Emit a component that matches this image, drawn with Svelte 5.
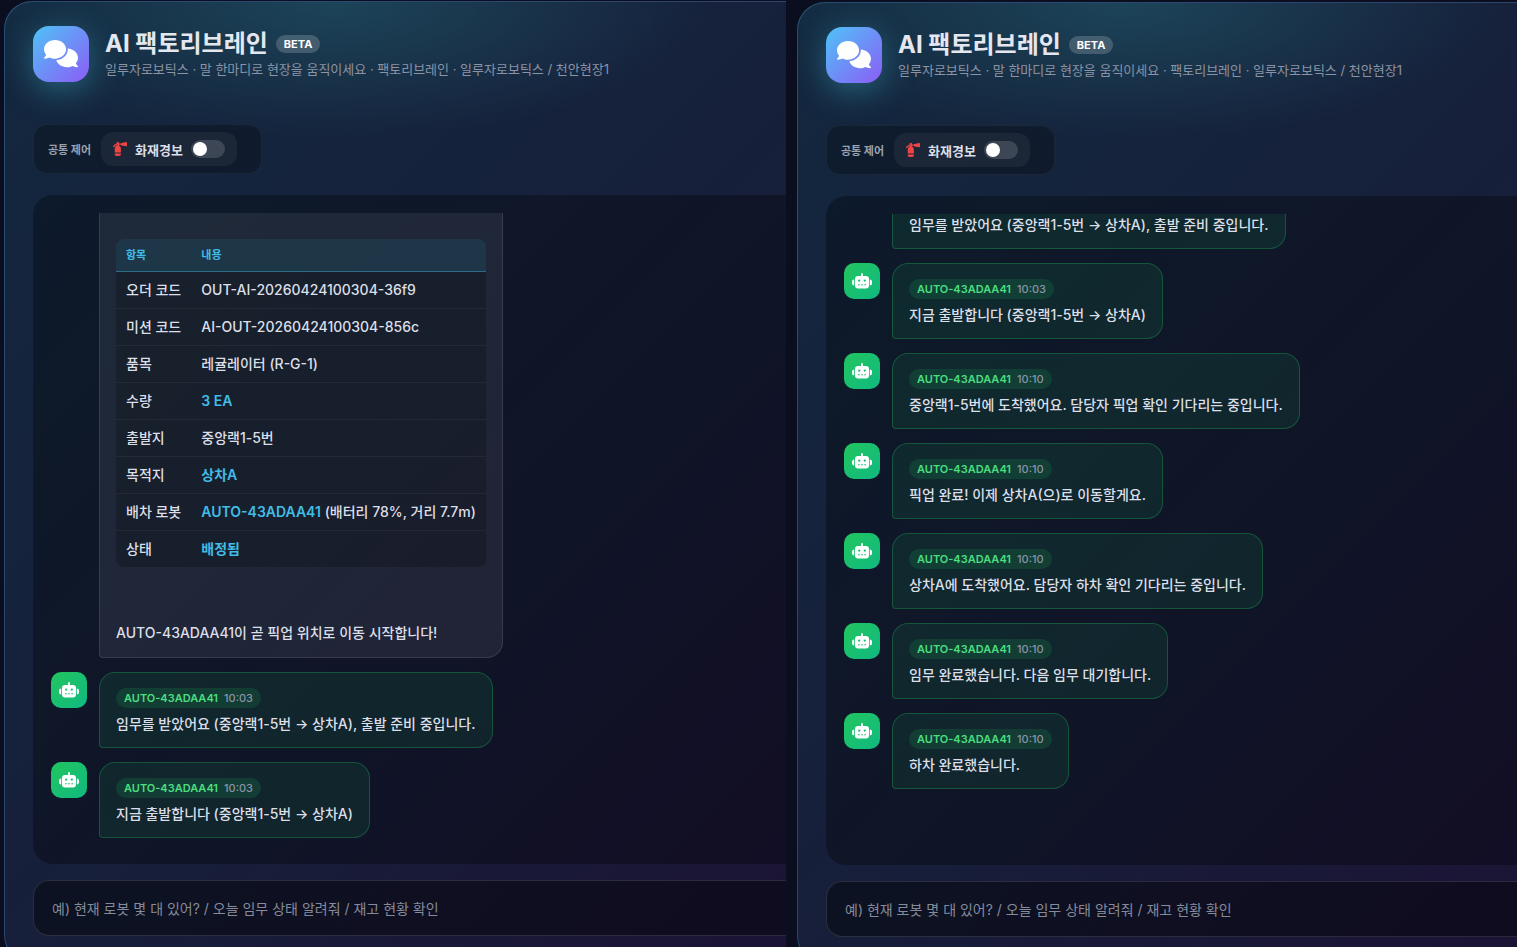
<script>
  const order = [
    { label: '오더 코드', value: 'OUT-AI-20260424100304-36f9' },
    { label: '미션 코드', value: 'AI-OUT-20260424100304-856c' },
    { label: '품목', value: '레귤레이터 (R-G-1)' },
    { label: '수량', strong: '3 EA' },
    { label: '출발지', value: '중앙랙1-5번' },
    { label: '목적지', strong: '상차A' },
    { label: '배차 로봇', strong: 'AUTO-43ADAA41', value: ' (배터리 78%, 거리 7.7m)' },
    { label: '상태', strong: '배정됨' },
  ];

  const robot = 'AUTO-43ADAA41';
  const accepted = { time: '10:03', text: '임무를 받았어요 (중앙랙1-5번 → 상차A), 출발 준비 중입니다.' };
  const departed = { time: '10:03', text: '지금 출발합니다 (중앙랙1-5번 → 상차A)' };

  const panes = [
    { id: 'first', order: true, messages: [accepted, departed] },
    {
      id: 'second',
      order: false,
      messages: [
        accepted,
        departed,
        { time: '10:10', text: '중앙랙1-5번에 도착했어요. 담당자 픽업 확인 기다리는 중입니다.' },
        { time: '10:10', text: '픽업 완료! 이제 상차A(으)로 이동할게요.' },
        { time: '10:10', text: '상차A에 도착했어요. 담당자 하차 확인 기다리는 중입니다.' },
        { time: '10:10', text: '임무 완료했습니다. 다음 임무 대기합니다.' },
        { time: '10:10', text: '하차 완료했습니다.' },
      ],
    },
  ];

  let alarms = $state({ first: false, second: false });
</script>

{#snippet robotIcon()}
  <div class="avatar">
    <svg viewBox="0 0 20 16" aria-hidden="true">
      <path fill-rule="evenodd" d="M10 0a.9.9 0 0 1 .9.9V3H14a3 3 0 0 1 3 3v6.500a3 3 0 0 1-3 3H6a3 3 0 0 1-3-3V6a3 3 0 0 1 3-3h3.100V.9A.9.9 0 0 1 10 0zM7.200 6.400a1.150 1.150 0 1 0 0 2.300 1.150 1.150 0 0 0 0-2.300zM12.800 6.400a1.150 1.150 0 1 0 0 2.300 1.150 1.150 0 0 0 0-2.300zM6 11.300v1h1.700v-1zM9.150 11.300v1h1.700v-1zM12.300 11.300v1H14v-1z" />
      <path d="M2.200 6.500v6A2.200 2.200 0 0 1 0 10.300V8.700a2.200 2.200 0 0 1 2.200-2.200zM17.800 6.500A2.200 2.200 0 0 1 20 8.700v1.600a2.200 2.200 0 0 1-2.200 2.200z" />
    </svg>
  </div>
{/snippet}

<div class="split">
  {#each panes as pane (pane.id)}
    <section class="pane {pane.id}">
      <div class="panel">
        <header>
          <div class="logo">
            <svg viewBox="0 0 640 512" aria-hidden="true">
              <path d="M208 352c114.9 0 208-78.8 208-176S322.9 0 208 0S0 78.8 0 176c0 38.6 14.7 74.3 39.6 103.4c-3.5 9.4-8.7 17.7-14.2 24.7c-4.8 6.2-9.7 11-13.3 14.3c-1.8 1.6-3.3 2.9-4.3 3.7c-.5 .4-.9 .7-1.1 .8l-.2 .2C1 327.2-1.4 334.4 .8 340.9S9.1 352 16 352c21.8 0 43.8-5.6 62.1-12.5c9.2-3.5 17.8-7.4 25.2-11.4C134.1 343.3 169.8 352 208 352zM448 176c0 112.3-99.1 196.9-216.5 207C255.8 457.4 336.4 512 432 512c38.2 0 73.9-8.7 104.7-23.9c7.5 4 16 7.9 25.2 11.4c18.3 6.9 40.3 12.5 62.1 12.5c6.9 0 13.1-4.5 15.2-11.1c2.1-6.6-.2-13.8-5.8-17.9l-.2-.2c-.2-.2-.6-.4-1.1-.8c-1-.8-2.5-2-4.3-3.7c-3.6-3.3-8.5-8.1-13.3-14.3c-5.5-7-10.7-15.4-14.2-24.7c24.9-29 39.6-64.7 39.6-103.4c0-92.8-84.9-168.9-192.6-175.5c.4 5.1 .6 10.3 .6 15.5z" />
            </svg>
          </div>
          <div class="titles">
            <h1>AI 팩토리브레인 <span class="beta">BETA</span></h1>
            <p>일루자로보틱스 · 말 한마디로 현장을 움직이세요 · 팩토리브레인 · 일루자로보틱스 / 천안현장1</p>
          </div>
        </header>

        <div class="controls">
          <span class="controls-title">공통 제어</span>
          <label class="alarm">
            <svg viewBox="0 0 512 512" aria-hidden="true">
              <path d="M500.3 7.3C507.7 13.3 512 22.4 512 32v96c0 9.6-4.3 18.7-11.7 24.7s-17.2 8.5-26.6 6.6l-160-32C301.5 124.9 292 115.7 289 104H224v34.8c37.8 18 64 56.5 64 101.2V384H64V240c0-44.7 26.2-83.2 64-101.2V110c-36.2 11.1-66 36.9-82.3 70.5c-5.8 11.9-20.2 16.9-32.1 11.1S-3.3 171.4 2.5 159.5C26.7 109.8 72.7 72.6 128 60.4V32c0-17.7 14.3-32 32-32h32c17.7 0 32 14.3 32 32V56h65c3-11.7 12.5-20.9 24.7-23.4l160-32c9.4-1.9 19.1 .6 26.6 6.6zM288 416v32c0 35.3-28.7 64-64 64H128c-35.3 0-64-28.7-64-64V416H288zM176 96a16 16 0 1 0 0-32 16 16 0 1 0 0 32z" />
            </svg>
            <span>화재경보</span>
            <input type="checkbox" role="switch" bind:checked={alarms[pane.id]} />
          </label>
        </div>

        <div class="chat">
          <div class="messages">
            {#if pane.order}
              <div class="row">
                {@render robotIcon()}
                <div class="bubble order">
                  <table>
                    <thead>
                      <tr><th>항목</th><th>내용</th></tr>
                    </thead>
                    <tbody>
                      {#each order as item}
                        <tr>
                          <td>{item.label}</td>
                          <td>{#if item.strong}<strong>{item.strong}</strong>{/if}{item.value ?? ''}</td>
                        </tr>
                      {/each}
                    </tbody>
                  </table>
                  <p>AUTO-43ADAA41이 곧 픽업 위치로 이동 시작합니다!</p>
                </div>
              </div>
            {/if}
            {#each pane.messages as message}
              <div class="row">
                {@render robotIcon()}
                <div class="bubble robot">
                  <div class="sender"><b>{robot}</b><time>{message.time}</time></div>
                  <p>{message.text}</p>
                </div>
              </div>
            {/each}
          </div>
        </div>

        <input
          class="prompt"
          type="text"
          aria-label="메시지 입력"
          placeholder="예) 현재 로봇 몇 대 있어? / 오늘 임무 상태 알려줘 / 재고 현황 확인"
        />
      </div>
    </section>
  {/each}
</div>

<style>
  :global(body) {
    margin: 0;
    background: #0a0e1f;
  }
  .split {
    display: grid;
    grid-template-columns: 786fr 731fr;
    height: 100vh;
    overflow: hidden;
    font-family: Inter, "Noto Sans CJK KR", sans-serif;
    color: #dcdfe8;
  }
  .split * {
    box-sizing: border-box;
  }
  .pane {
    min-width: 0;
    padding: 1px 0 0 4px;
  }
  .pane.second {
    padding: 2px 0 0 11px;
  }
  .panel {
    display: flex;
    flex-direction: column;
    height: calc(100vh + 15px);
    padding: 24px 0 26px 28px;
    border: 1px solid rgba(79, 160, 220, 0.35);
    border-right: 0;
    border-radius: 28px 0 0 28px;
    background:
      radial-gradient(ellipse 380px 135px at 330px 0, rgba(40, 115, 130, 0.4), transparent),
      linear-gradient(135deg, #13283f 0%, #171e39 60%, #1c1335 100%);
  }
  header {
    display: flex;
    gap: 16px;
    height: 56px;
  }
  .logo {
    display: grid;
    place-items: center;
    flex: none;
    width: 56px;
    height: 56px;
    border-radius: 16px;
    background: linear-gradient(135deg, #4fc3f7, #8b5cf6);
    box-shadow: 0 8px 32px rgba(64, 190, 220, 0.4);
  }
  .logo svg {
    width: 34px;
    fill: #fff;
  }
  h1 {
    display: flex;
    align-items: center;
    gap: 8px;
    margin: 0;
    color: #e5e7ef;
    font-size: 24px;
    line-height: 36px;
    font-weight: 700;
    white-space: nowrap;
  }
  .beta {
    padding: 0 8px;
    border-radius: 10px;
    background: rgba(255, 255, 255, 0.18);
    color: #fff;
    font-size: 11px;
    line-height: 18px;
  }
  p {
    margin: 0;
  }
  header p {
    color: #8b93a5;
    font-size: 13px;
    line-height: 14px;
    white-space: nowrap;
  }
  .controls {
    display: flex;
    align-items: center;
    align-self: flex-start;
    gap: 10px;
    height: 50px;
    margin: 42px 0 21px;
    padding: 0 24px 0 14px;
    border: 1px solid rgba(255, 255, 255, 0.05);
    border-radius: 14px;
    background: rgba(0, 0, 0, 0.25);
    white-space: nowrap;
  }
  .controls-title {
    color: #9aa1b1;
    font-size: 11px;
    font-weight: 700;
  }
  .alarm {
    display: flex;
    align-items: center;
    gap: 8px;
    height: 34px;
    padding: 0 12px;
    border-radius: 12px;
    background: rgba(255, 255, 255, 0.05);
    font-size: 13px;
    font-weight: 600;
    cursor: pointer;
  }
  .alarm svg {
    width: 14px;
    fill: #ef4444;
  }
  .alarm input {
    appearance: none;
    display: flex;
    align-items: center;
    width: 34px;
    height: 18px;
    margin: 0;
    padding: 0 2px;
    border-radius: 9px;
    background: rgba(255, 255, 255, 0.15);
    cursor: pointer;
  }
  .alarm input::before {
    content: "";
    width: 14px;
    height: 14px;
    border-radius: 50%;
    background: #fff;
  }
  .alarm input:checked {
    justify-content: flex-end;
    background: #ef4444;
  }
  .chat {
    display: flex;
    flex: 1;
    min-height: 0;
    padding: 18px 0 18px 18px;
    border-radius: 20px 0 0 20px;
    background: rgba(0, 0, 0, 0.3);
  }
  .messages {
    display: flex;
    flex: 1;
    flex-direction: column;
    justify-content: flex-end;
    gap: 14px;
    min-width: 0;
    padding-bottom: 8px;
    overflow: hidden;
  }
  .second .messages {
    padding-bottom: 58px;
  }
  .row {
    display: flex;
    flex: none;
    align-items: flex-start;
    gap: 12px;
  }
  .avatar {
    display: grid;
    place-items: center;
    flex: none;
    width: 36px;
    height: 36px;
    border-radius: 10px;
    background: linear-gradient(135deg, #22c55e, #10b981);
  }
  .avatar svg {
    width: 20px;
    height: 16px;
    fill: #fff;
  }
  .bubble {
    padding: 15px 16px 12px;
    border: 1px solid rgba(255, 255, 255, 0.1);
    border-radius: 16px 16px 16px 4px;
    background: rgba(255, 255, 255, 0.07);
    font-size: 14px;
    line-height: 22px;
    font-weight: 500;
  }
  .order {
    padding-top: 80px;
    padding-bottom: 13px;
  }
  .robot {
    border-color: rgba(34, 197, 94, 0.3);
    background: rgba(34, 197, 94, 0.1);
  }
  .sender {
    display: flex;
    gap: 6px;
    width: fit-content;
    margin-bottom: 5px;
    padding: 0 8px;
    border-radius: 10px;
    background: rgba(34, 197, 94, 0.15);
    font-size: 11px;
    line-height: 20px;
  }
  .sender b {
    color: #4ade80;
    font-weight: 600;
  }
  .sender time {
    color: #8b93a5;
  }
  table {
    width: 370px;
    margin-bottom: 55px;
    border-spacing: 0;
    border-radius: 8px;
    background: rgba(0, 0, 0, 0.2);
    overflow: hidden;
  }
  th,
  td {
    padding: 7px 10px;
    text-align: left;
    white-space: nowrap;
  }
  th {
    padding: 6px 10px;
    border-bottom: 1px solid rgba(65, 188, 230, 0.4);
    background: rgba(65, 188, 230, 0.15);
    color: #41bce6;
    font-size: 11px;
    line-height: 20px;
    font-weight: 700;
  }
  tr + tr td {
    border-top: 1px solid rgba(255, 255, 255, 0.05);
  }
  strong {
    color: #41bce6;
    font-weight: 600;
  }
  .prompt {
    flex: none;
    height: 56px;
    margin-top: 16px;
    padding: 0 18px;
    border: 1px solid rgba(255, 255, 255, 0.12);
    border-right: 0;
    border-radius: 16px 0 0 16px;
    outline: none;
    background: rgba(0, 0, 0, 0.4);
    color: inherit;
    font: inherit;
    font-size: 14px;
  }
  .prompt::placeholder {
    color: #858b9b;
    opacity: 1;
  }
</style>
